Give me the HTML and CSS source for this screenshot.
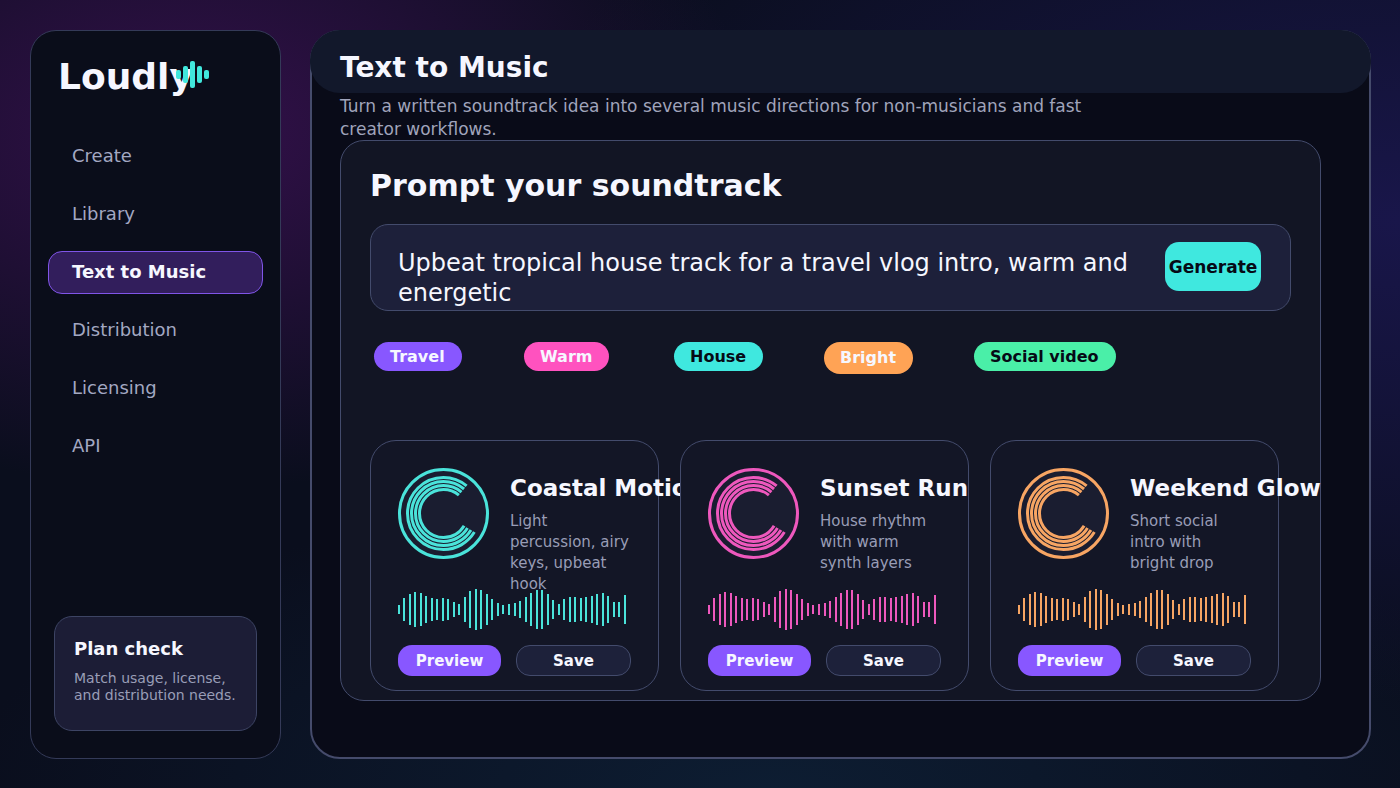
FILE: index.html
```
<!DOCTYPE html>
<html lang="en">
<head>
  <meta charset="UTF-8">
  <meta name="viewport" content="width=device-width, initial-scale=1.0">
  <title>Text to Music - Loudly</title>
  <link rel="stylesheet" href="styles.css">
</head>
<body>

  <!-- shared artwork, coloured through currentColor -->
  <svg class="sprite" aria-hidden="true">
    <symbol id="disc" viewBox="0 0 91 91">
      <circle cx="45.5" cy="45.5" r="44" fill="#1a1d30" stroke="currentColor" stroke-width="3"/>
      <g fill="none" stroke="currentColor" stroke-width="3" stroke-dasharray="279 81" stroke-dashoffset="-31">
        <circle cx="45.5" cy="45.5" r="36" pathLength="360"/>
        <circle cx="45.5" cy="45.5" r="32" pathLength="360"/>
        <circle cx="45.5" cy="45.5" r="28" pathLength="360"/>
        <circle cx="45.5" cy="45.5" r="24" pathLength="360"/>
      </g>
    </symbol>
    <symbol id="wave" viewBox="0 0 229 41">
      <path fill="none" stroke="currentColor" stroke-width="2" d="M1 16v9M6 9v23M12 5v31M17 3v35M23 4v33M28 7v27M34 9v23M39 10v21M45 9v23M50 10v21M56 13v15M61 15v11M67 8v25M72 2v37M78 0v41M83 1v39M89 5v31M94 10v21M100 14v13M105 16v9M111 15v11M117 14v13M122 12v17M128 8v25M133 4v33M139 1v39M144 1v39M150 5v31M155 11v19M161 15v11M166 10v21M172 8v25M177 8v25M183 9v23M188 8v25M194 7v27M199 5v31M205 4v33M210 7v27M216 13v15M221 13v15M227 6v29"/>
    </symbol>
  </svg>

  <div class="page">
    <aside class="sidebar">
      <div class="brand">
        Loudly
        <svg class="brand-mark" viewBox="0 0 33 27" aria-hidden="true">
          <g fill="#41e8dd">
            <rect x="0" y="9" width="5" height="9" rx="2"/>
            <rect x="7" y="5" width="5" height="17" rx="2"/>
            <rect x="14" y="0" width="5" height="27" rx="2"/>
            <rect x="21" y="5" width="5" height="17" rx="2"/>
            <rect x="28" y="9" width="5" height="9" rx="2"/>
          </g>
        </svg>
      </div>

      <nav class="nav">
        <a href="#">Create</a>
        <a href="#">Library</a>
        <a href="#" class="active">Text to Music</a>
        <a href="#">Distribution</a>
        <a href="#">Licensing</a>
        <a href="#">API</a>
      </nav>

      <div class="plan">
        <h3>Plan check</h3>
        <p>Match usage, license, and distribution needs.</p>
      </div>
    </aside>

    <main class="main">
      <header class="topbar">
        <h1>Text to Music</h1>
      </header>
      <p class="subtitle">Turn a written soundtrack idea into several music directions for non-musicians and fast creator workflows.</p>

      <section class="panel">
        <h2>Prompt your soundtrack</h2>

        <form class="prompt">
          <textarea aria-label="Soundtrack prompt" rows="2" spellcheck="false">Upbeat tropical house track for a travel vlog intro, warm and energetic</textarea>
          <button type="button" class="generate">Generate</button>
        </form>

        <div class="tags">
          <span class="tag violet">Travel</span>
          <span class="tag pink">Warm</span>
          <span class="tag teal">House</span>
          <span class="tag orange">Bright</span>
          <span class="tag green">Social video</span>
        </div>

        <div class="cards">
          <article class="card card-teal">
            <div class="card-head">
              <svg class="disc" aria-hidden="true"><use href="#disc"/></svg>
              <div class="card-text">
                <h3>Coastal Motion</h3>
                <p>Light percussion, airy keys, upbeat hook</p>
              </div>
            </div>
            <svg class="wave" aria-hidden="true"><use href="#wave"/></svg>
            <div class="actions">
              <button type="button" class="preview">Preview</button>
              <button type="button" class="save">Save</button>
            </div>
          </article>

          <article class="card card-pink">
            <div class="card-head">
              <svg class="disc" aria-hidden="true"><use href="#disc"/></svg>
              <div class="card-text">
                <h3>Sunset Run</h3>
                <p>House rhythm with warm synth layers</p>
              </div>
            </div>
            <svg class="wave" aria-hidden="true"><use href="#wave"/></svg>
            <div class="actions">
              <button type="button" class="preview">Preview</button>
              <button type="button" class="save">Save</button>
            </div>
          </article>

          <article class="card card-orange">
            <div class="card-head">
              <svg class="disc" aria-hidden="true"><use href="#disc"/></svg>
              <div class="card-text">
                <h3>Weekend Glow</h3>
                <p>Short social intro with bright drop</p>
              </div>
            </div>
            <svg class="wave" aria-hidden="true"><use href="#wave"/></svg>
            <div class="actions">
              <button type="button" class="preview">Preview</button>
              <button type="button" class="save">Save</button>
            </div>
          </article>
        </div>
      </section>
    </main>
  </div>

</body>
</html>
```
FILE: styles.css
```
* {
  box-sizing: border-box;
}
body {
  margin: 0;
  font-family: "DejaVu Sans", Verdana, sans-serif;
  color: #f6f7ff;
  background:
    radial-gradient(ellipse 560px 360px at 190px 130px, #33104a 0%, rgba(51, 16, 74, 0) 100%),
    radial-gradient(ellipse 900px 480px at 100% 220px, #19164a 0%, rgba(25, 22, 74, 0) 100%),
    radial-gradient(ellipse 800px 300px at 55% 100%, #0d1d32 0%, rgba(13, 29, 50, 0) 100%),
    #0a0e1d;
}
h1, h2, h3, p {
  margin: 0;
}
button, textarea {
  font-family: inherit;
}
button {
  padding: 0;
  border: none;
  cursor: pointer;
}
.sprite {
  display: none;
}
.page {
  display: grid;
  grid-template-columns: 251px minmax(0, 1fr);
  gap: 29px;
  min-height: 100vh;
  padding: 30px 29px 29px 30px;
}

/* sidebar */
.sidebar {
  display: flex;
  flex-direction: column;
  padding: 25px 17px 27px;
  background: #0a0d1a;
  border: 1px solid #343a58;
  border-radius: 26px;
}
.brand {
  position: relative;
  padding-left: 10px;
  font-size: 36px;
  line-height: 42px;
  font-weight: bold;
}
.brand-mark {
  position: absolute;
  left: 128px;
  top: 5px;
  width: 33px;
  height: 27px;
}
.nav {
  display: flex;
  flex-direction: column;
  gap: 15px;
  margin-top: 37px;
}
.nav a {
  padding: 0 23px 2px;
  border: 1px solid transparent;
  border-radius: 14px;
  font-size: 18px;
  line-height: 39px;
  color: #a3a8c2;
  text-decoration: none;
}
.nav a.active {
  background: #321e5c;
  border-color: #8055e8;
  color: #f6f7ff;
  font-weight: bold;
}
.plan {
  margin: auto 6px 0;
  padding: 20px 19px 26px;
  background: #1c1d36;
  border: 1px solid #3d4464;
  border-radius: 18px;
}
.plan h3 {
  margin-bottom: 9px;
  font-size: 18px;
  line-height: 24px;
}
.plan p {
  font-size: 14px;
  line-height: 17px;
  color: #999db6;
}

/* main area */
.main {
  padding: 0 48px 40px 28px;
  background: #090b18;
  border: 2px solid #454b6b;
  border-radius: 30px;
}
.topbar {
  /* sits on top of the frame */
  margin: -2px -50px 0 -30px;
  padding: 21px 30px 8px;
  background: #12182b;
  border-radius: 30px;
}
.topbar h1 {
  font-size: 28px;
  line-height: 34px;
}
.subtitle {
  max-width: 760px;
  padding-top: 2px;
  margin-bottom: -1px;
  font-size: 17px;
  line-height: 23px;
  color: #a0a4bb;
}
.panel {
  padding: 27px 29px 9px;
  background: #121524;
  border: 1px solid #434b6c;
  border-radius: 24px;
}
.panel h2 {
  font-size: 30px;
  line-height: 36px;
}

.prompt {
  display: flex;
  align-items: flex-start;
  margin-top: 20px;
  padding: 0 29px 0 27px;
  background: #1d203a;
  border: 1px solid #434b6c;
  border-radius: 18px;
}
.prompt textarea {
  flex: 1;
  min-width: 0;
  height: 85px;
  margin-right: 20px;
  padding: 23px 0 0;
  background: none;
  border: none;
  outline: none;
  resize: none;
  overflow: hidden;
  color: #f6f7ff;
  font-size: 24px;
  line-height: 30px;
}
.generate {
  width: 96px;
  height: 49px;
  margin-top: 17px;
  background: #3fe8df;
  border-radius: 14px;
  color: #060a16;
  font-size: 17px;
  font-weight: bold;
}

.tags {
  display: grid;
  grid-template-columns: repeat(5, 150px);
  align-items: start;
  justify-items: start;
  height: 98px;
  margin-top: 31px;
  padding-left: 4px;
}
.tag {
  padding: 0 17px 0 16px;
  border-radius: 16px;
  font-size: 16px;
  line-height: 29px;
  font-weight: bold;
}
.tag.violet { background: #8857ff; }
.tag.pink { background: #ff52bf; }
.tag.teal { background: #3fe8df; color: #060a16; }
.tag.orange { background: #ffa355; line-height: 32px; }
.tag.green { background: #4aefa8; color: #060a16; }

/* result cards */
.cards {
  display: grid;
  grid-template-columns: repeat(3, minmax(0, 1fr));
  gap: 21px;
  padding-right: 12px;
}
.card {
  padding: 27px 27px 14px;
  background: #131626;
  border: 1px solid #434b6c;
  border-radius: 26px;
}
.card-teal { color: #4ae3da; }
.card-pink { color: #ee58bd; }
.card-orange { color: #f7a563; }
.card-head {
  display: flex;
  gap: 21px;
  height: 121px;
}
.disc {
  flex: none;
  width: 91px;
  height: 91px;
}
.card-text {
  flex: 1;
  min-width: 0;
  padding: 6px 1px 0 0;
}
.card-text h3 {
  margin-bottom: 9px;
  color: #f6f7ff;
  font-size: 23px;
  line-height: 28px;
  white-space: nowrap;
}
.card-text p {
  color: #999db6;
  font-size: 15px;
  line-height: 21px;
}
.wave {
  display: block;
  width: 229px;
  height: 41px;
}
.actions {
  display: grid;
  grid-template-columns: 103px minmax(0, 1fr);
  gap: 15px;
  margin-top: 15px;
}
.actions button {
  height: 31px;
  border-radius: 14px;
  color: #f6f7ff;
  font-size: 15px;
  font-weight: bold;
}
.actions .preview {
  background: #8857ff;
}
.actions .save {
  background: #1d213a;
  border: 1px solid #434b6c;
}
```
